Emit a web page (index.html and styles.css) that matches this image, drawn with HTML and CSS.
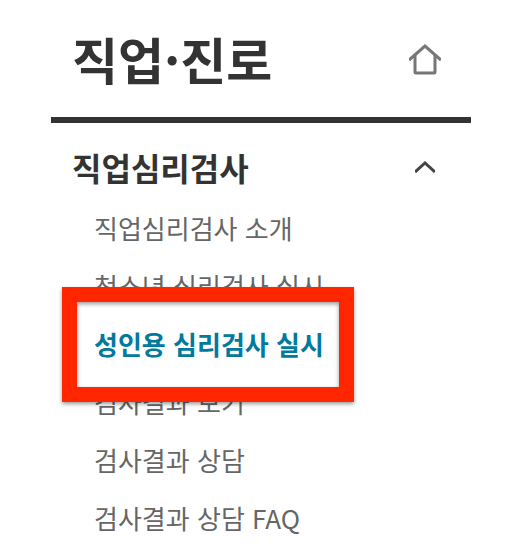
FILE: index.html
```html
<!DOCTYPE html>
<html lang="ko">
<head>
    <meta charset="UTF-8">
    <meta name="viewport" content="width=device-width, initial-scale=1.0">
    <title>직업·진로</title>
    <link rel="stylesheet" href="styles.css">
</head>
<body>
    <nav class="side-menu" aria-label="직업·진로">
        <div class="title-bar">
            <h1>직업·진로</h1>
            <a class="home" href="#" aria-label="홈">
                <svg width="32" height="32" viewBox="0 0 32 32" fill="none" stroke="#777" stroke-width="3">
                    <path d="M0 17 L16 3 L32 17"/>
                    <path d="M6 12 V29 Q6 30 7 30 H25 Q26 30 26 29 V12"/>
                </svg>
            </a>
        </div>
        <div class="group-bar">
            <h2>직업심리검사</h2>
            <button class="toggle" type="button" aria-label="메뉴 접기" aria-expanded="true" aria-controls="test-menu">
                <svg width="20" height="12" viewBox="0 0 20 12" fill="none" stroke="#444" stroke-width="3">
                    <path d="M0 11 L10 2 L20 11"/>
                </svg>
            </button>
        </div>
        <ul class="menu" id="test-menu">
            <li><a href="#">직업심리검사 소개</a></li>
            <li><a href="#">청소년 심리검사 실시</a></li>
            <li><a class="active" href="#" aria-current="page">성인용 심리검사 실시</a></li>
            <li><a href="#">검사결과 보기</a></li>
            <li><a href="#">검사결과 상담</a></li>
            <li><a href="#">검사결과 상담 FAQ</a></li>
        </ul>
    </nav>
</body>
</html>
```
FILE: styles.css
```css
body {
    margin: 0;
    background: #fff;
    color: #333;
    font-family: "Noto Sans CJK KR", sans-serif;
}

h1,
h2,
ul {
    margin: 0;
    padding: 0;
}

a {
    color: inherit;
    text-decoration: none;
}

svg {
    display: block;
}

.side-menu {
    padding: 0 49px 0 51px;
}

.title-bar,
.group-bar {
    display: flex;
    align-items: center;
    justify-content: space-between;
}

.title-bar {
    border-bottom: 6px solid #333;
    padding: 0 30px 0 21px;
}

.title-bar h1 {
    font-size: 50px;
    line-height: 117px;
}

.group-bar {
    padding: 14px 36px 2px 21px;
}

.group-bar h2 {
    font-size: 32px;
    line-height: 60px;
}

.toggle {
    border: 0;
    background: none;
    padding: 0;
    cursor: pointer;
}

.menu {
    list-style: none;
    padding-left: 43px;
}

.menu a {
    display: inline-block;
    color: #666;
    font-size: 26px;
    line-height: 58px;
    vertical-align: top;
}

.menu .active {
    position: relative;
    color: #007a9e;
    font-weight: bold;
}

/* red marker frame around the selected item */
.menu .active::after {
    content: "";
    position: absolute;
    inset: -28px -30px -29px -32px;
    border: 15px solid #ff2600;
    box-shadow: 0 2px 4px rgba(0, 0, 0, 0.4), inset 0 2px 4px rgba(0, 0, 0, 0.4);
    pointer-events: none;
}
```
